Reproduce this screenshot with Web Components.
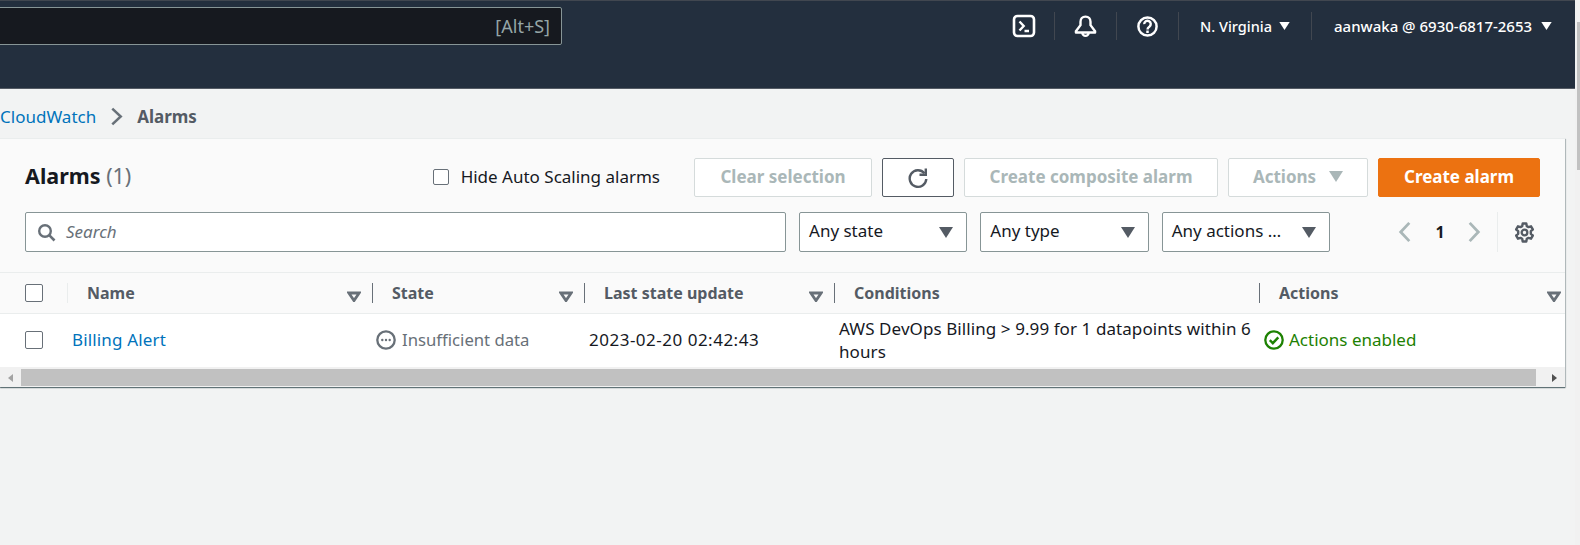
<!DOCTYPE html>
<html>
<head>
<meta charset="utf-8">
<title>Alarms</title>
<style>
  html, body { margin: 0; height: 100%; overflow: hidden; background: #f2f3f3; }
  body { font: 17px/22px "Noto Sans", "Open Sans", sans-serif; color: #16191f; }
</style>
</head>
<body>
<alarms-page>
  <top-nav></top-nav>
  <bread-crumb></bread-crumb>
  <alarm-panel>
    <alarm-table>
      <col-head narrow><tick-box size="18"></tick-box></col-head>
      <col-head sort first>Name</col-head>
      <col-head sort>State</col-head>
      <col-head sort>Last state update</col-head>
      <col-head>Conditions</col-head>
      <col-head sort last>Actions</col-head>

      <row-cell pad="25"><tick-box size="18"></tick-box></row-cell>
      <row-cell pad="5"><a style="color:#0073bb;text-decoration:none;letter-spacing:.15px">Billing Alert</a></row-cell>
      <row-cell pad="4"><state-label icon="pending" color="#687078" gap="6" style="font-size:16.700px">Insufficient data</state-label></row-cell>
      <row-cell pad="5"><span style="letter-spacing:.5px">2023-02-20 02:42:43</span></row-cell>
      <row-cell pad="5"><span style="letter-spacing:.08px">AWS DevOps Billing &gt; 9.99 for 1 datapoints within 6 hours</span></row-cell>
      <row-cell pad="5"><state-label icon="ok" color="#1d8102">Actions enabled</state-label></row-cell>
    </alarm-table>
    <h-scroll></h-scroll>
  </alarm-panel>
</alarms-page>

<script>
const ICONS = {
  terminal: '<rect x="2" y="2" width="20" height="20" rx="3.500" fill="none" stroke="currentColor" stroke-width="2.600"/><path d="M7.500 7.500l4.200 4.500-4.200 4.500M12.500 17h4.500" fill="none" stroke="currentColor" stroke-width="2.400"/>',
  bell: '<path d="M12 2.500c-3 0-4.800 2.200-4.800 5v3.200L2.800 16.500v1.200h18.400v-1.200l-4.400-5.800V7.500c0-2.800-1.800-5-4.800-5z" fill="none" stroke="currentColor" stroke-width="2.300" stroke-linejoin="round"/><path d="M9 18a3 3 0 0 0 6 0" fill="none" stroke="currentColor" stroke-width="2.300"/>',
  help: '<circle cx="12" cy="12" r="9.500" fill="none" stroke="currentColor" stroke-width="2.600"/><path d="M8.600 9.500a3.400 3.400 0 1 1 5.300 2.700c-1.300.8-1.900 1.400-1.900 2.900" fill="none" stroke="currentColor" stroke-width="2.500"/><rect x="10.700" y="16.200" width="2.600" height="2.600" fill="currentColor"/>',
  search: '<circle cx="8" cy="8" r="5.800" fill="none" stroke="currentColor" stroke-width="2.400"/><path d="M12.200 12.200l5.300 5.300" stroke="currentColor" stroke-width="2.600"/>',
  refresh: '<path d="M17.400 6.200A8.300 8.300 0 1 0 19.300 12" fill="none" stroke="currentColor" stroke-width="2.400"/><path d="M18.800 1.500v6.300h-6.300" fill="none" stroke="currentColor" stroke-width="2.400"/>',
  left: '<path d="M10.500 1.500L2.500 10l8 8.500" fill="none" stroke="currentColor" stroke-width="2.600"/>',
  right: '<path d="M2.500 1.500l8 8.500-8 8.500" fill="none" stroke="currentColor" stroke-width="2.600"/>',
  gear: '<path d="M8.300 1.500h3.400l.5 2.500 1.600.9 2.400-.8 1.700 3-1.900 1.600v2.600l1.900 1.600-1.700 3-2.400-.8-1.600.9-.5 2.500H8.300l-.5-2.500-1.600-.9-2.400.8-1.700-3 1.900-1.600V8.700L2.100 7.100l1.700-3 2.400.8 1.600-.9z" fill="none" stroke="currentColor" stroke-width="2.300" stroke-linejoin="round"/><circle cx="10" cy="10" r="2.700" fill="none" stroke="currentColor" stroke-width="2.200"/>',
  pending: '<circle cx="10" cy="10" r="8.700" fill="none" stroke="currentColor" stroke-width="2.300"/><circle cx="6.300" cy="10" r="1.200" fill="currentColor"/><circle cx="10" cy="10" r="1.200" fill="currentColor"/><circle cx="13.700" cy="10" r="1.200" fill="currentColor"/>',
  ok: '<circle cx="10" cy="10" r="8.700" fill="none" stroke="currentColor" stroke-width="2.300"/><path d="M5.800 10.200l3 3 5.500-5.800" fill="none" stroke="currentColor" stroke-width="2.400"/>',
  sort: '<path d="M1.800 2h10.400L7 9.600z" fill="#fafafa" stroke="currentColor" stroke-width="2.800" stroke-linejoin="miter"/>',
  caret: '<path d="M0 0h13L6.500 10z" fill="currentColor"/>',
  crumb: '<path d="M2 1.500l8 7.500-8 7.500" fill="none" stroke="currentColor" stroke-width="2.400"/>'
};
const VIEW = { terminal: 24, bell: 24, help: 24 };

class AwsIcon extends HTMLElement {
  connectedCallback() {
    const n = this.getAttribute("name");
    const w = this.getAttribute("w") || 20, h = this.getAttribute("h") || w;
    const box = { search: "0 0 19 19", left: "0 0 13 20", right: "0 0 13 20", sort: "0 0 14 11", caret: "0 0 13 10", crumb: "0 0 12 18", refresh: "0 0 22 22" }[n]
      || "0 0 " + (VIEW[n] || 20) + " " + (VIEW[n] || 20);
    this.attachShadow({ mode: "open" }).innerHTML =
      `<style>:host{display:inline-flex;flex:none;line-height:0}</style><svg width="${w}" height="${h}" viewBox="${box}">${ICONS[n]}</svg>`;
  }
}
customElements.define("aws-icon", AwsIcon);

class AlarmsPage extends HTMLElement {
  constructor() {
    super();
    this.attachShadow({ mode: "open" }).innerHTML = `
      <style>
        :host { display: flex; height: 545px; }
        main { flex: 1; min-width: 0; }
        .vbar { flex: none; width: 5px; background: #f1f1f1; padding: 22px 0 375px 2px; box-sizing: border-box; }
        .vbar div { height: 100%; background: #c1c1c1; }
      </style>
      <main><slot></slot></main>
      <div class="vbar"><div></div></div>`;
  }
}
customElements.define("alarms-page", AlarmsPage);

class TopNav extends HTMLElement {
  constructor() {
    super();
    this.attachShadow({ mode: "open" }).innerHTML = `
      <style>
        :host { display: flex; height: 89px; box-sizing: border-box; background: #232f3e;
          border-top: 1px solid #414750; border-bottom: 1px solid #545b64; color: #fff; align-items: flex-start; }
        .find { width: 564px; height: 38px; margin: 6px 0 0 -2px; box-sizing: border-box; background: #16191f;
          border: 1px solid #879596; border-radius: 2px; display: flex; align-items: center; justify-content: flex-end;
          padding-right: 11px; color: #95a5a6; font-size: 18px; }
        .items { margin-left: auto; display: flex; margin-top: 11px; font-size: 14.500px; font-weight: 500; }
        .cell { height: 28px; display: flex; align-items: center; justify-content: center; border-right: 1px solid #414750; box-sizing: border-box; }
        .cell:last-child { border-right: 0; justify-content: flex-start; padding-left: 22px; font-size: 15px; }
        .text { gap: 7px; }
        .cell:last-child.text { gap: 9px; }
      </style>
      <div class="find">[Alt+S]</div>
      <div class="items">
        <div class="cell" style="width:62px"><aws-icon name="terminal" w="24"></aws-icon></div>
        <div class="cell" style="width:62px"><aws-icon name="bell" w="25"></aws-icon></div>
        <div class="cell" style="width:62px"><aws-icon name="help" w="23"></aws-icon></div>
        <div class="cell text" style="width:133px"><span>N. Virginia</span><aws-icon name="caret" w="11" h="8"></aws-icon></div>
        <div class="cell text" style="width:263px"><span>aanwaka @ 6930-6817-2653</span><aws-icon name="caret" w="11" h="8"></aws-icon></div>
      </div>`;
  }
}
customElements.define("top-nav", TopNav);

class BreadCrumb extends HTMLElement {
  constructor() {
    super();
    this.attachShadow({ mode: "open" }).innerHTML = `
      <style>
        :host { display: flex; height: 49px; box-sizing: border-box; align-items: center; gap: 14px; padding: 6px 0 0 0; color: #545b64; }
        a { color: #0073bb; }
        b { font-weight: 700; }
      </style>
      <a>CloudWatch</a><aws-icon name="crumb" w="13" h="19" style="color:#687078"></aws-icon><b>Alarms</b>`;
  }
}
customElements.define("bread-crumb", BreadCrumb);

class TickBox extends HTMLElement {
  constructor() {
    super();
    const s = this.getAttribute("size") || 16;
    this.attachShadow({ mode: "open" }).innerHTML = `
      <style>:host { display: block; flex: none; width: ${s}px; height: ${s}px; box-sizing: border-box; background: #fff; border: 1px solid #687078; border-radius: 2px; }</style>`;
  }
}
customElements.define("tick-box", TickBox);

class AwsButton extends HTMLElement {
  constructor() {
    super();
    const w = this.getAttribute("w");
    this.attachShadow({ mode: "open" }).innerHTML = `
      <style>
        :host { display: flex; flex: none; width: ${w}px; height: 39px; box-sizing: border-box; align-items: center; justify-content: center; gap: 13px;
          background: #fff; border: 1px solid #d5dbdb; border-radius: 2px; color: #aab7b8; font-weight: 700; padding-bottom: 2px; }
        :host([kind=normal]) { border-color: #545b64; color: #545b64; padding-bottom: 0; }
        :host([kind=primary]) { background: #ec7211; border-color: #ec7211; color: #fff; }
      </style>
      <slot></slot>`;
  }
}
customElements.define("aws-button", AwsButton);

class AwsSelect extends HTMLElement {
  constructor() {
    super();
    this.attachShadow({ mode: "open" }).innerHTML = `
      <style>
        :host { display: flex; flex: none; width: 168.330px; height: 40px; box-sizing: border-box; align-items: center; justify-content: space-between;
          background: #fff; border: 1px solid #879596; border-radius: 2px; padding: 0 13px 0 9px; }
        span { padding-bottom: 2px; white-space: nowrap; }
      </style>
      <span><slot></slot></span><aws-icon name="caret" w="14" h="11" style="color:#545b64"></aws-icon>`;
  }
}
customElements.define("aws-select", AwsSelect);

class AlarmPanel extends HTMLElement {
  constructor() {
    super();
    this.attachShadow({ mode: "open" }).innerHTML = `
      <style>
        :host { display: block; margin-right: 10px; background: #fafafa; border-top: 1px solid #eaeded;
          box-shadow: 0 1px 1px 0 rgba(0,28,36,.5), 1px 1px 1px 0 rgba(0,28,36,.2); }
        .head { padding: 19px 25px 20px; display: flex; flex-direction: column; gap: 15px; }
        .row { display: flex; align-items: center; }
        h2 { margin: 0; font-size: 21.500px; line-height: 28px; font-weight: 700; flex: 1; padding-bottom: 3px; }
        h2 span { font-weight: 400; color: #687078; }
        .hide { display: flex; align-items: center; gap: 12px; margin-right: 34px; padding-bottom: 2px; }
        .btns { display: flex; gap: 10px; }
        .tools { gap: 13px; }
        .find { flex: 1; height: 40px; box-sizing: border-box; background: #fff; border: 1px solid #879596; border-radius: 2px;
          display: flex; align-items: center; gap: 10px; padding-left: 11px; color: #687078; font-style: italic; }
        .pager { width: 197px; flex: none; display: grid; grid-template-columns: 50px 24px 46px 22px 12px 43px; align-items: center; justify-items: center; height: 40px; }
        .pager b { font-weight: 700; font-size: 16px; }
        .gear { grid-column: 6; justify-self: stretch; height: 40px; border-left: 1px solid #eaeded; padding-left: 16px; display: flex; align-items: center; box-sizing: border-box; color: #545b64; }
      </style>
      <div class="head">
        <div class="row">
          <h2>Alarms <span>(1)</span></h2>
          <label class="hide"><tick-box></tick-box>Hide Auto Scaling alarms</label>
          <div class="btns">
            <aws-button w="178">Clear selection</aws-button>
            <aws-button w="72" kind="normal"><aws-icon name="refresh" w="22"></aws-icon></aws-button>
            <aws-button w="254">Create composite alarm</aws-button>
            <aws-button w="140">Actions<aws-icon name="caret" w="14" h="11"></aws-icon></aws-button>
            <aws-button w="162" kind="primary">Create alarm</aws-button>
          </div>
        </div>
        <div class="row tools">
          <div class="find"><aws-icon name="search" w="19"></aws-icon>Search</div>
          <aws-select>Any state</aws-select>
          <aws-select>Any type</aws-select>
          <aws-select>Any actions …</aws-select>
          <div class="pager">
            <aws-icon name="left" w="14" h="22" style="grid-column:2;color:#aab7b8"></aws-icon>
            <b>1</b>
            <aws-icon name="right" w="14" h="22" style="color:#aab7b8"></aws-icon>
            <div class="gear"><aws-icon name="gear" w="21"></aws-icon></div>
          </div>
        </div>
      </div>
      <slot></slot>`;
  }
}
customElements.define("alarm-panel", AlarmPanel);

class AlarmTable extends HTMLElement {
  constructor() {
    super();
    this.attachShadow({ mode: "open" }).innerHTML = `
      <style>
        :host { display: grid; grid-template-columns: 67px 305px 212px 250px 425px 1fr; }
      </style>
      <slot></slot>`;
  }
}
customElements.define("alarm-table", AlarmTable);

class ColHead extends HTMLElement {
  constructor() {
    super();
    const narrow = this.hasAttribute("narrow");
    this.attachShadow({ mode: "open" }).innerHTML = `
      <style>
        :host { display: flex; height: 42px; box-sizing: border-box; align-items: center; background: #fafafa;
          border-top: 1px solid #eaeded; border-bottom: 1px solid #eaeded; color: #545b64; font-weight: 700; font-size: 16px; }
        :host([narrow]) { padding-left: 25px; }
        .in { flex: 1; height: 20px; display: flex; align-items: center; justify-content: space-between; padding: 0 11px 0 19px; border-left: 1px solid #687078; }
        :host([first]) .in { border-left-color: #eaeded; }
        :host([last]) .in { padding-right: 4px; }
        aws-icon { color: #687078; position: relative; top: 3px; }
      </style>
      ${narrow ? "<slot></slot>" : `<div class="in"><span><slot></slot></span>${this.hasAttribute("sort") ? '<aws-icon name="sort" w="14" h="11"></aws-icon>' : ""}</div>`}`;
  }
}
customElements.define("col-head", ColHead);

class RowCell extends HTMLElement {
  constructor() {
    super();
    const pad = this.getAttribute("pad") || 4;
    this.attachShadow({ mode: "open" }).innerHTML = `
      <style>
        :host { display: flex; height: 53px; box-sizing: border-box; align-items: center; background: #fff; padding: 0 5px 2px ${pad}px; line-height: 23px; }
      </style>
      <div><slot></slot></div>`;
  }
}
customElements.define("row-cell", RowCell);

class StateLabel extends HTMLElement {
  constructor() {
    super();
    this.attachShadow({ mode: "open" }).innerHTML = `
      <style>:host { display: flex; align-items: center; gap: ${this.getAttribute("gap") || 5}px; color: ${this.getAttribute("color")}; }</style>
      <aws-icon name="${this.getAttribute("icon")}" w="20"></aws-icon><slot></slot>`;
  }
}
customElements.define("state-label", StateLabel);

class HScroll extends HTMLElement {
  constructor() {
    super();
    this.attachShadow({ mode: "open" }).innerHTML = `
      <style>
        :host { display: flex; height: 20px; box-sizing: border-box; padding-top: 2px; background: #f1f1f1; align-items: stretch; }
        .end { flex: none; display: flex; align-items: center; justify-content: center; }
        .thumb { flex: 1; background: #c1c1c1; height: 17px; }
        i { width: 0; height: 0; border-style: solid; border-color: transparent; border-width: 4.500px 0; }
      </style>
      <div class="end" style="width:21px"><i style="border-right:5px solid #a3a3a3"></i></div>
      <div class="thumb"></div>
      <div class="end" style="width:29px;justify-content:center;padding-left:7px;box-sizing:border-box"><i style="border-left:5px solid #505050"></i></div>`;
  }
}
customElements.define("h-scroll", HScroll);
</script>
</body>
</html>
